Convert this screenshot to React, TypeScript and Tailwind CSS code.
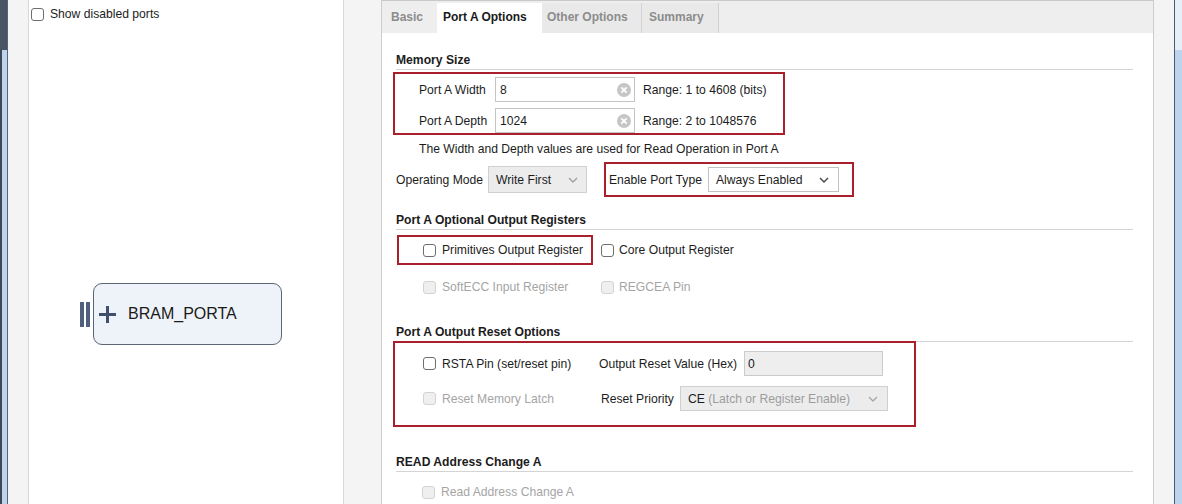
import React from "react";

function Checkbox({ disabled }: { disabled?: boolean }) {
  return (
    <span
      className={
        disabled
          ? "block w-[13px] h-[13px] shrink-0 rounded-[3px] border border-[#d3d3d3] bg-[#efefef]"
          : "block w-[13px] h-[13px] shrink-0 rounded-[3px] border border-[#6e6e6e] bg-white"
      }
    />
  );
}

function Chevron({ color }: { color: string }) {
  return (
    <svg width="10" height="6" viewBox="0 0 10 6" className="shrink-0">
      <polyline points="1,1 5,5 9,1" fill="none" stroke={color} strokeWidth="1.4" />
    </svg>
  );
}

function ClearIcon() {
  return (
    <svg width="14" height="14" viewBox="0 0 14 14" className="shrink-0">
      <circle cx="7" cy="7" r="7" fill="#c6c6c6" />
      <line x1="4.3" y1="4.3" x2="9.7" y2="9.7" stroke="#fff" strokeWidth="1.8" />
      <line x1="9.7" y1="4.3" x2="4.3" y2="9.7" stroke="#fff" strokeWidth="1.8" />
    </svg>
  );
}

function Heading({ children, className }: { children: React.ReactNode; className: string }) {
  return (
    <div className={"ml-[14px] mr-[20px] h-[21px] border-b border-[#d4d4d4] font-bold flex items-center pt-[1px] " + className}>
      {children}
    </div>
  );
}

export default function App() {
  return (
    <div className="flex w-[1182px] h-[504px] overflow-hidden bg-[#f4f4f4] text-[12.15px] leading-[14px] text-[#1c1c1c] font-['Liberation_Sans',Arial,sans-serif]">
      {/* left window edge */}
      <div className="w-[7px] h-full flex flex-col">
        <div className="h-[50px] bg-[#4a5563]" />
        <div className="flex-1 bg-[#bdd4ec] border-l-2 border-[#3d4858]" />
      </div>
      <div className="w-[1px] h-full bg-[#56657e]" />
      <div className="w-[20px] h-full" />

      {/* left panel */}
      <div className="w-[316px] h-full bg-white border-x border-[#d8d8d8] flex flex-col">
        <div className="mt-[7px] h-[14px] pl-[2px] flex items-center gap-[6px]">
          <Checkbox />
          <span>Show disabled ports</span>
        </div>
        <div className="mt-[262px] ml-[51px] flex items-center gap-[3px]">
          <div className="flex gap-[2px]">
            <div className="w-[4px] h-[25px] bg-[#50607c]" />
            <div className="w-[4px] h-[25px] bg-[#50607c]" />
          </div>
          <div className="w-[189px] h-[62px] rounded-[9px] border border-[#5d6474] bg-[#eef2f9] flex items-center pl-[5px]">
            <svg width="17" height="17" viewBox="0 0 17 17" className="shrink-0">
              <line x1="0" y1="8.5" x2="17" y2="8.5" stroke="#3f4f6c" strokeWidth="3" />
              <line x1="8.5" y1="0" x2="8.5" y2="17" stroke="#3f4f6c" strokeWidth="3" />
            </svg>
            <span className="ml-[12px] text-[16px] leading-[18px] text-[#1a1a1a]">BRAM_PORTA</span>
          </div>
        </div>
      </div>

      <div className="w-[37px] h-full" />

      {/* right panel */}
      <div className="w-[773px] h-full bg-white border-x border-[#cdcdcd] flex flex-col">
        <div className="h-[33px] shrink-0 bg-[#eeeeee] border-t border-[#c9c9c9] flex items-end font-bold text-[12px]">
          <div className="w-[55px] h-[30px] pt-[7px] pl-[9px] text-[#8c8c8c]">Basic</div>
          <div className="w-[105px] h-[30px] pt-[7px] pl-[6px] bg-white text-[#1a1a1a]">Port A Options</div>
          <div className="w-[100px] h-[30px] pt-[7px] pl-[5px] bg-[#e9e9e9] border-r border-[#d2d2d2] text-[#8c8c8c]">Other Options</div>
          <div className="w-[77px] h-[30px] pt-[7px] pl-[7px] bg-[#e9e9e9] border-r border-[#d2d2d2] text-[#8c8c8c]">Summary</div>
        </div>

        <div className="flex flex-col pt-[16px]">
          <Heading className="">Memory Size</Heading>

          {/* box 1 */}
          <div className="mt-[2px] ml-[11px] w-[392px] h-[63px] border-2 border-[#a91f2c] pt-[3px] flex flex-col gap-[6px]">
            <div className="h-[25px] flex items-center">
              <div className="w-[100px] pl-[24px]">Port A Width</div>
              <div className="w-[140px] h-[25px] border border-[#c4c4c4] flex items-center justify-between pl-[4px] pr-[3px]">
                <span>8</span>
                <ClearIcon />
              </div>
              <span className="ml-[8px]">Range: 1 to 4608 (bits)</span>
            </div>
            <div className="h-[25px] flex items-center">
              <div className="w-[100px] pl-[24px]">Port A Depth</div>
              <div className="w-[140px] h-[25px] border border-[#c4c4c4] flex items-center justify-between pl-[4px] pr-[3px]">
                <span>1024</span>
                <ClearIcon />
              </div>
              <span className="ml-[8px]">Range: 2 to 1048576</span>
            </div>
          </div>

          <div className="mt-[4px] h-[20px] ml-[37px] flex items-center">
            The Width and Depth values are used for Read Operation in Port A
          </div>

          <div className="mt-[3px] h-[35px] ml-[14px] flex items-center">
            <div className="w-[92px]">Operating Mode</div>
            <div className="w-[99px] h-[27px] bg-[#ececec] border border-[#d0d0d0] flex items-center justify-between pl-[7px] pr-[8px]">
              <span>Write First</span>
              <Chevron color="#a0a0a0" />
            </div>
            <div className="ml-[17px] w-[250px] h-[35px] border-2 border-[#a91f2c] flex items-center pl-[3px]">
              <div className="w-[99px]">Enable Port Type</div>
              <div className="w-[131px] h-[25px] bg-white border border-[#c2c2c2] flex items-center justify-between pl-[7px] pr-[9px]">
                <span>Always Enabled</span>
                <Chevron color="#444444" />
              </div>
            </div>
          </div>

          <Heading className="mt-[12px]">Port A Optional Output Registers</Heading>

          <div className="mt-[5px] flex items-center">
            <div className="ml-[15px] w-[196px] h-[30px] border-2 border-[#a91f2c] flex items-center pl-[24px] gap-[6px]">
              <Checkbox />
              <span>Primitives Output Register</span>
            </div>
            <div className="ml-[8px] flex items-center gap-[5px]">
              <Checkbox />
              <span>Core Output Register</span>
            </div>
          </div>

          <div className="mt-[12px] h-[20px] ml-[41px] flex items-center text-[#a5a5a5]">
            <div className="w-[178px] flex items-center gap-[6px]">
              <Checkbox disabled />
              <span>SoftECC Input Register</span>
            </div>
            <div className="flex items-center gap-[5px]">
              <Checkbox disabled />
              <span>REGCEA Pin</span>
            </div>
          </div>

          <Heading className="mt-[24px]">Port A Output Reset Options</Heading>

          {/* box 4 */}
          <div className="-mt-[1px] ml-[11px] w-[523px] h-[86px] border-2 border-[#a91f2c] pt-[7px] flex flex-col gap-[8px]">
            <div className="h-[27px] pl-[28px] flex items-center">
              <div className="w-[176px] flex items-center gap-[6px]">
                <Checkbox />
                <span>RSTA Pin (set/reset pin)</span>
              </div>
              <div className="w-[145px]">Output Reset Value (Hex)</div>
              <div className="w-[139px] h-[25px] bg-[#eeeeee] border border-[#cbcbcb] flex items-center pl-[3px]">0</div>
            </div>
            <div className="h-[27px] pl-[28px] flex items-center">
              <div className="w-[178px] flex items-center gap-[6px] text-[#a5a5a5]">
                <Checkbox disabled />
                <span>Reset Memory Latch</span>
              </div>
              <div className="w-[79px]">Reset Priority</div>
              <div className="w-[208px] h-[25px] bg-[#ececec] border border-[#cfcfcf] flex items-center justify-between pl-[7px] pr-[9px]">
                <span>
                  CE <span className="text-[#9c9c9c]">(Latch or Register Enable)</span>
                </span>
                <Chevron color="#a8a8a8" />
              </div>
            </div>
          </div>

          <Heading className="mt-[24px]">READ Address Change A</Heading>

          <div className="mt-[10px] h-[20px] ml-[40px] flex items-center gap-[6px] text-[#a5a5a5]">
            <Checkbox disabled />
            <span>Read Address Change A</span>
          </div>
        </div>
      </div>

      <div className="w-[20px] h-full" />
      {/* right window edge */}
      <div className="w-[1px] h-full bg-[#4b5870]" />
      <div className="w-[7px] h-full flex flex-col">
        <div className="h-[50px] bg-[#e6eef7]" />
        <div className="flex-1 bg-[#bdd4ee]" />
      </div>
    </div>
  );
}
